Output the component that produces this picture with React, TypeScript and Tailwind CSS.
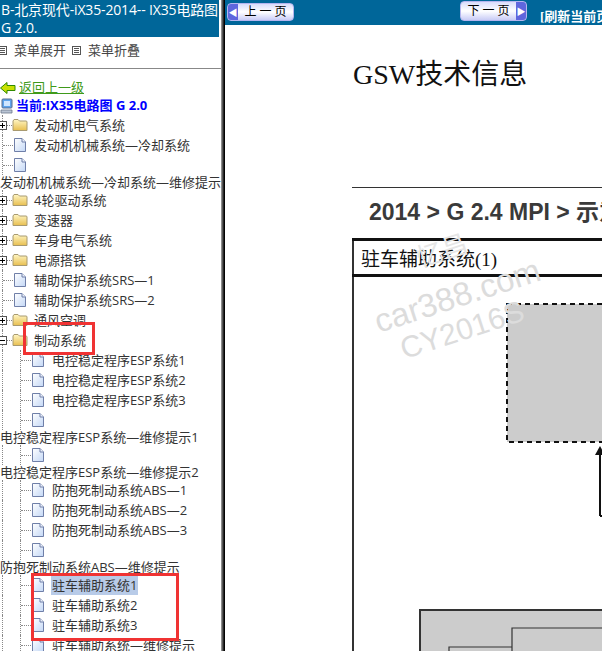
import type { ReactNode } from "react";

const cjk = "font-['Open_Sans','Noto_Sans_CJK_SC',sans-serif]";

function FolderIcon() {
  return (
    <svg width="16" height="14" viewBox="0 0 16 14" className="shrink-0">
      <defs>
        <linearGradient id="folderFill" x1="0" y1="0" x2="0" y2="1">
          <stop offset="0" stopColor="#fff6c4" />
          <stop offset="1" stopColor="#e8bf50" />
        </linearGradient>
      </defs>
      <path d="M1 3 L2 1.5 H6 L7.5 3 H14 Q15 3 15 4 V12.5 H1 Z" fill="url(#folderFill)" stroke="#a89a70" strokeWidth="1" />
    </svg>
  );
}

function PageIcon() {
  return (
    <svg width="12" height="14" viewBox="0 0 12 14" className="shrink-0">
      <defs>
        <linearGradient id="pageFill" x1="0" y1="0" x2="1" y2="1">
          <stop offset="0" stopColor="#ffffff" />
          <stop offset="1" stopColor="#c4d8f6" />
        </linearGradient>
      </defs>
      <path d="M0.5 0.5 H8 L11.5 4 V13.5 H0.5 Z" fill="url(#pageFill)" stroke="#6f7fa8" strokeWidth="1" />
      <path d="M8 0.5 V4 H11.5" fill="#eef3fc" stroke="#6f7fa8" strokeWidth="1" />
    </svg>
  );
}

function ExpandBox({ open }: { open?: boolean }) {
  return (
    <span className="relative z-10 flex h-[9px] w-[9px] items-center justify-center border border-[#555] bg-white">
      <span className="absolute h-px w-[5px] bg-black" />
      {!open && <span className="absolute h-[5px] w-px bg-black" />}
    </span>
  );
}

function TreeRow({
  label,
  level = 1,
  kind = "page",
  selected,
}: {
  label?: string;
  level?: 1 | 2;
  kind?: "page" | "plus" | "minus";
  selected?: boolean;
}) {
  return (
    <div className="flex h-5 items-center">
      <div className="relative h-5 w-[3px] shrink-0 border-r border-dotted border-[#888]" />
      {level === 2 && (
        <div className="h-5 w-[18px] shrink-0 border-r border-dotted border-[#888]" />
      )}
      {kind === "page" ? (
        <div className="w-[10px] shrink-0 border-t border-dotted border-[#888]" />
      ) : (
        <div className="-ml-[5px] flex shrink-0 items-center">
          <ExpandBox open={kind === "minus"} />
          <div className="w-[5px] border-t border-dotted border-[#888]" />
        </div>
      )}
      {kind === "page" ? (
        <span className="ml-px">
          <PageIcon />
        </span>
      ) : (
        <FolderIcon />
      )}
      {label && (
        <span
          className={`whitespace-nowrap px-px text-[13px] leading-5 text-[#333] ${
            kind === "page" ? "ml-[7px]" : "ml-[5px]"
          } ${selected ? "bg-[#b8cbe8]" : ""}`}
        >
          {label}
        </span>
      )}
    </div>
  );
}

function WrappedLabel({ children }: { children: ReactNode }) {
  return (
    <div className="h-[15px] whitespace-nowrap text-[13px] leading-[15px] text-[#333]">{children}</div>
  );
}

function MenuToggle({ label }: { label: string }) {
  return (
    <span className="flex items-center gap-[7px]">
      <span className="flex h-[9px] w-[9px] flex-col justify-center gap-px border border-[#555] px-px">
        <span className="h-px bg-[#555]" />
        <span className="h-px bg-[#555]" />
        <span className="h-px bg-[#555]" />
      </span>
      <span className="text-[13px] text-[#444]">{label}</span>
    </span>
  );
}

function PageButton({ label, dir, className }: { label: string; dir: "prev" | "next"; className: string }) {
  const arrow = (
    <span className="flex h-full w-[10px] items-center justify-center bg-[#5f66dd] text-[9px] leading-none text-white">
      {dir === "prev" ? "◀" : "▶"}
    </span>
  );
  return (
    <div
      className={`flex w-[67px] shrink-0 items-center overflow-hidden rounded-sm border border-[#b5b5ef] bg-gradient-to-b from-[#d9dcfb] via-white to-[#c9ccf6] ${className}`}
    >
      {dir === "prev" && arrow}
      <span className="flex-1 whitespace-nowrap text-center font-['Liberation_Serif','Noto_Sans_CJK_SC',serif] text-[12px] leading-none text-black">
        {label}
      </span>
      {dir === "next" && arrow}
    </div>
  );
}

export default function App() {
  return (
    <div className={`flex h-[651px] w-[602px] overflow-hidden bg-white ${cjk}`}>
      {/* left menu frame */}
      <div className="relative h-full w-[221px] shrink-0 overflow-hidden">
        <div className="h-[37px] w-[219px] bg-[#006699] pl-px pt-[1px] text-[14px] leading-[18px] tracking-[-0.15px] text-white">
          <div className="whitespace-nowrap">B-北京现代-iX35-2014-- IX35电路图</div>
          <div>G 2.0.</div>
        </div>
        <div className="flex h-[31px] items-center gap-[6px] pb-[6px] pt-[2px]">
          <span className="-ml-[2px]">
            <MenuToggle label="菜单展开" />
          </span>
          <MenuToggle label="菜单折叠" />
        </div>
        <div className="h-px bg-[#888]" />

        <div className="mt-[10px] flex h-[18px] items-center">
          <svg width="16" height="12" viewBox="0 0 16 12" className="shrink-0">
            <path d="M0.5 6 L7 0.5 V3.5 H15 V8.5 H7 V11.5 Z" fill="#c8e000" stroke="#2f8a00" strokeWidth="1" />
          </svg>
          <span className="ml-[3px] text-[13px] text-[#3f9a1a] underline">返回上一级</span>
        </div>
        <div className="flex h-[18px] items-center">
          <svg width="14" height="16" viewBox="0 0 14 16" className="shrink-0">
            <rect x="2" y="1" width="10" height="9" rx="1" fill="#5ea4ec" stroke="#5a6f90" />
            <rect x="4" y="3" width="6" height="5" fill="#cfe6ff" />
            <path d="M1 12 H12 V15 H1 Z" fill="#b9c4d4" stroke="#6d7a8c" strokeWidth="0.8" />
          </svg>
          <span className="ml-[2px] whitespace-nowrap text-[13px] font-bold text-[#0000ff]">当前:IX35电路图 G 2.0</span>
        </div>

        <div>
          <TreeRow kind="plus" label="发动机电气系统" />
          <TreeRow label="发动机机械系统—冷却系统" />
          <TreeRow />
          <WrappedLabel>发动机机械系统—冷却系统—维修提示</WrappedLabel>
          <TreeRow kind="plus" label="4轮驱动系统" />
          <TreeRow kind="plus" label="变速器" />
          <TreeRow kind="plus" label="车身电气系统" />
          <TreeRow kind="plus" label="电源搭铁" />
          <TreeRow label="辅助保护系统SRS—1" />
          <TreeRow label="辅助保护系统SRS—2" />
          <TreeRow kind="plus" label="通风空调" />
          <TreeRow kind="minus" label="制动系统" />
          <TreeRow level={2} label="电控稳定程序ESP系统1" />
          <TreeRow level={2} label="电控稳定程序ESP系统2" />
          <TreeRow level={2} label="电控稳定程序ESP系统3" />
          <TreeRow level={2} />
          <WrappedLabel>电控稳定程序ESP系统—维修提示1</WrappedLabel>
          <TreeRow level={2} />
          <WrappedLabel>电控稳定程序ESP系统—维修提示2</WrappedLabel>
          <TreeRow level={2} label="防抱死制动系统ABS—1" />
          <TreeRow level={2} label="防抱死制动系统ABS—2" />
          <TreeRow level={2} label="防抱死制动系统ABS—3" />
          <TreeRow level={2} />
          <WrappedLabel>防抱死制动系统ABS—维修提示</WrappedLabel>
          <TreeRow level={2} label="驻车辅助系统1" selected />
          <TreeRow level={2} label="驻车辅助系统2" />
          <TreeRow level={2} label="驻车辅助系统3" />
          <TreeRow level={2} label="驻车辅助系统—维修提示" />
        </div>

        {/* red annotation boxes drawn over the tree */}
        <div className="absolute left-[23px] top-[322px] h-[33px] w-[72px] border-[3px] border-[#f03333]" />
        <div className="absolute left-[31px] top-[573px] h-[68px] w-[148px] border-[3px] border-[#f03333]" />
      </div>

      <div className="h-full w-[4px] shrink-0 bg-gradient-to-r from-[#aaaaaa] to-black" />

      {/* right content frame */}
      <div className="relative min-w-0 flex-1 overflow-hidden">
        <div className="relative flex h-[25px] bg-[#006699]">
          <PageButton label="上 一 页" dir="prev" className="ml-[2px] mt-[3px] h-[18px]" />
          <PageButton label="下 一 页" dir="next" className="ml-[166px] mt-px h-[20px]" />
          <span className="ml-[13px] mt-[9px] whitespace-nowrap font-['Liberation_Serif','Noto_Sans_CJK_SC',serif] text-[13px] font-bold leading-4 text-white">
            [刷新当前页]
          </span>
        </div>

        <div className="w-[500px] pl-[127px]">
          <h1 className="ml-px mt-[32px] h-[36px] font-['Liberation_Serif','Noto_Sans_CJK_SC',serif] text-[28px] font-normal leading-[36px] text-[#111]">
            GSW技术信息
          </h1>
          <div className="mt-[94px] h-px bg-[#333]" />
          <div className="ml-[17px] mt-[11px] h-[27px] whitespace-nowrap font-['Liberation_Sans','Noto_Sans_CJK_SC',sans-serif] text-[23px] font-bold leading-[27px] text-[#3a3a3a]">
            2014 &gt; G 2.4 MPI &gt; 示意图
          </div>
          <div className="mt-[12px] h-[420px] border-l-2 border-[#333]">
            <div className="-ml-[2px] flex h-[39px] items-center border-y-[3px] border-[#111] pl-[9px] pt-[4px] font-['Liberation_Serif','Noto_Sans_CJK_SC',serif] text-[19px] leading-none text-[#111]">
              驻车辅助系统(1)
            </div>
            <svg width="300" height="380" viewBox="0 0 300 380" className="block">
              <rect x="153" y="27" width="200" height="138" fill="#cccccc" stroke="#111" strokeWidth="2" strokeDasharray="5 4" />
              <path d="M246 239 V175" stroke="#111" strokeWidth="2" fill="none" />
              <path d="M246 169 L241 178 H251 Z" fill="#111" />
              <path d="M246 239 H300" stroke="#111" strokeWidth="2" fill="none" />
              <rect x="66" y="333" width="260" height="60" fill="#cccccc" stroke="#333" strokeWidth="2" />
              <path d="M158 380 V351 H300 M95 380 V370 H158" stroke="#333" strokeWidth="1.2" fill="none" />
            </svg>
          </div>
        </div>

        {/* faint watermark over the scanned page */}
        <div className="pointer-events-none absolute left-[146px] top-[279px] -rotate-[18deg] whitespace-nowrap font-['Liberation_Sans',sans-serif] text-[33px] leading-none text-[#dcdcdc]">
          car388.com
        </div>
        <div className="pointer-events-none absolute left-[173px] top-[315px] -rotate-[18deg] whitespace-nowrap font-['Liberation_Sans',sans-serif] text-[30px] leading-none text-[#dcdcdc]">
          CY2016S
        </div>
        <div className="pointer-events-none absolute left-[191px] top-[237px] -rotate-[18deg] whitespace-nowrap text-[26px] leading-none text-[#e6e6e6]">
          忆昌
        </div>
      </div>
    </div>
  );
}
